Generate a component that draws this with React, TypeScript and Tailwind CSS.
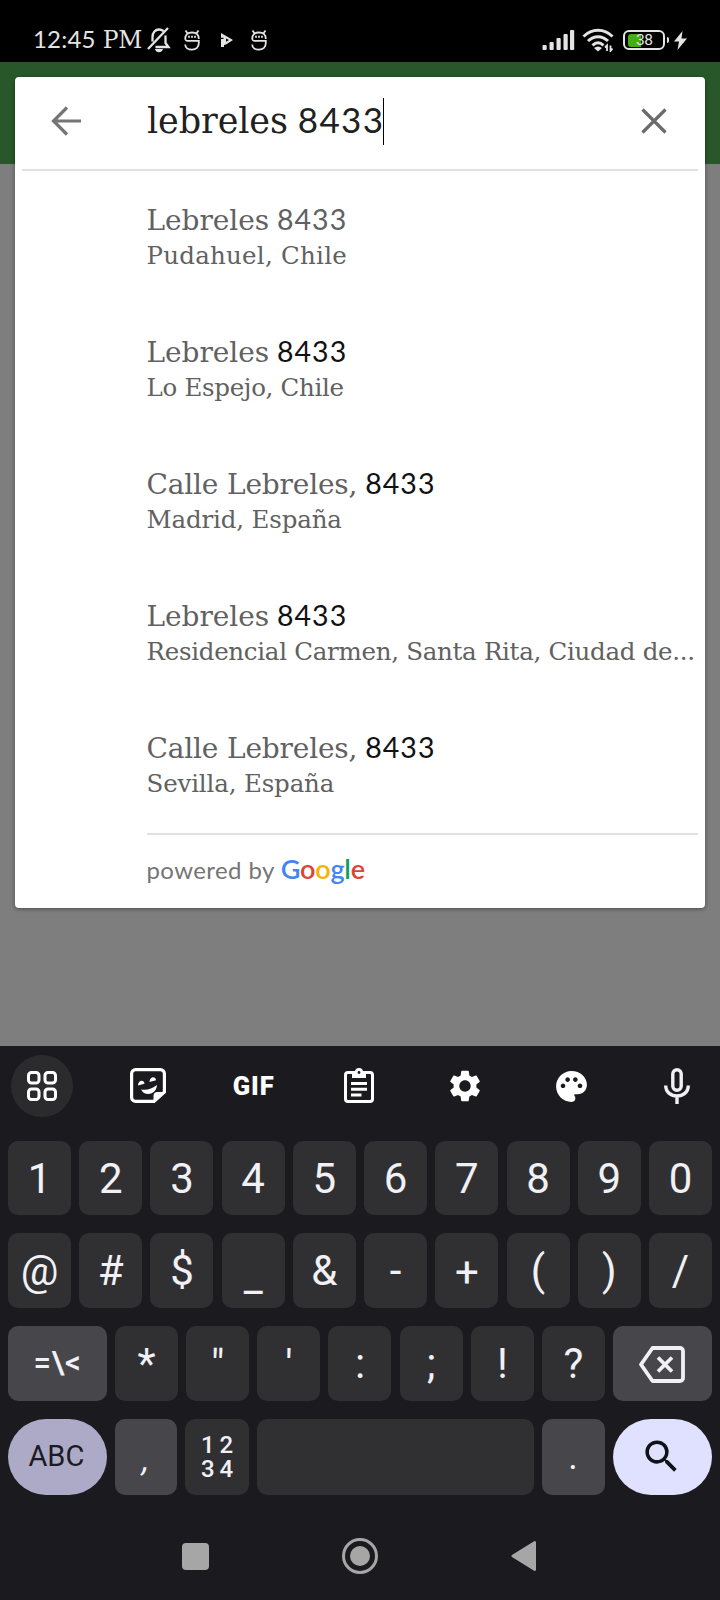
import type { ReactNode } from "react";
import { MdPalette, MdSearch, MdSettings } from "react-icons/md";

const slab = "font-['DejaVu_Serif',serif]";

function Digits({ children, className = "" }: { children: ReactNode; className?: string }) {
  return <span className={`font-[Lato,sans-serif] leading-none ${className}`}>{children}</span>;
}

function Mascot() {
  return (
    <svg width="16" height="21" viewBox="0 0 16 21" fill="none" stroke="#e4e4e4" strokeWidth="1.8">
      <path d="M1.500 .5l1.800 2.500M14.500 .5l-1.800 2.500M1.200 9C1.200 4.800 3.500 2.500 8 2.500S14.800 4.800 14.800 9M1.200 8C1.200 10.500 2 10.800 4 10.800H14.800V13c0 4.200-2.800 6.600-6.800 6.600S1.200 17.500 1.200 14.500" />
      <path d="M5 5.800v2M8 5.800v2M11 5.800v2" />
    </svg>
  );
}

function StatusBar() {
  return (
    <header className="flex h-[62px] items-center bg-black pt-[18px] pl-[33px] text-[#e4e4e4]">
      <div className={`${slab} w-[112px] whitespace-nowrap text-[23.500px] leading-[30px] tracking-[-0.3px]`}>
        <Digits className="text-[24px] tracking-[0.2px]">12:45</Digits>
        <span className="ml-[7px]">PM</span>
      </div>
      <svg className="ml-[2px]" width="24" height="26" viewBox="0 0 24 26" fill="none" stroke="#e4e4e4" strokeWidth="2.300">
        <path d="M1 22L21 1M5.500 14.500V10c0-4.500 3-7.500 6.500-7.500 2 0 3 .5 4.500 1.500M8.500 20h13L18.500 16V8.500" />
        <path d="M8 22h8c-.8 2.500-2 3.200-4 3.200s-3.400-.7-4-3.200z" fill="#e4e4e4" stroke="none" />
      </svg>
      <div className="ml-[13px]"><Mascot /></div>
      <svg className="ml-[21px]" width="12" height="14" viewBox="0 0 12 14" fill="#e4e4e4">
        <path fillRule="evenodd" d="M0 0l12 7-7 4.500-2 .5v2H0V6h2.500v-1.200H0zM5 5.500v3.300L8 7z" />
      </svg>
      <div className="ml-[18px]"><Mascot /></div>
      <div className="ml-[275px] flex items-center">
        <svg width="33" height="22" viewBox="0 0 33 22" fill="#e4e4e4">
          <rect x="0.500" y="16" width="4.200" height="5" rx="1" />
          <rect x="7.500" y="13" width="4.200" height="8" rx="1" />
          <rect x="14.500" y="9" width="4.200" height="12" rx="1" />
          <rect x="21.500" y="5" width="4.200" height="16" rx="1" />
          <rect x="28" y="1" width="4.200" height="20" rx="1" />
        </svg>
        <svg className="ml-[7px]" width="32" height="24" viewBox="0 0 32 24" fill="none" stroke="#e4e4e4" strokeWidth="3">
          <path d="M1.500 8.500C10 .3 22 .3 30.500 8.500M6 13c6-5.800 14-5.800 20 0M10.500 17.300c3.500-3.200 7.500-3.200 11 0" />
          <path d="M12 20c2.500-2 5.500-2 8 0l-4 3.500z" fill="#e4e4e4" stroke="none" />
          <path d="M25 23v-5.500l-2 2M28.500 17.500V23l2-2.500" strokeWidth="1.800" />
        </svg>
        <div className="ml-[9px] flex h-[20px] w-[42px] items-center rounded-[6px] border-2 border-[#e4e4e4] pl-[3px]">
          <div className="h-[13px] w-[13px] rounded-l-[3px] bg-[#43b00e]" />
          <span className="-ml-[5px] font-[Roboto,sans-serif] text-[15.500px] leading-[14px] tracking-[-0.4px]">38</span>
        </div>
        <div className="ml-[2px] h-[6px] w-[2px] rounded-r bg-[#e4e4e4]" />
        <svg className="ml-[5px]" width="13" height="19" viewBox="0 0 13 19" fill="#e4e4e4">
          <path d="M8.500 0L0 10.500h5L3.500 19 13 7.500H7.500z" />
        </svg>
      </div>
    </header>
  );
}

const results = [
  { street: "Lebreles", match: false, place: "Pudahuel, Chile", spacing: "tracking-[0.25px]" },
  { street: "Lebreles", match: true, place: "Lo Espejo, Chile", spacing: "tracking-[-0.3px]" },
  { street: "Calle Lebreles,", match: true, place: "Madrid, España", spacing: "tracking-[-0.15px]" },
  { street: "Lebreles", match: true, place: "Residencial Carmen, Santa Rita, Ciudad de...", spacing: "tracking-[-0.28px]" },
  { street: "Calle Lebreles,", match: true, place: "Sevilla, España", spacing: "tracking-[-0.15px]" },
];

function SearchCard() {
  return (
    <section className="relative flex h-[831px] flex-col rounded-[4px] bg-white shadow-[0_1px_4px_rgba(0,0,0,0.4)]">
      <div className="mx-[7px] flex h-[94px] items-center border-b-2 border-[#e0e0e0] pr-[31px] pb-[4px] pl-[29px]">
        <svg width="30" height="30" viewBox="0 0 30 30" fill="none" stroke="#757575" strokeWidth="3.200">
          <path d="M16 1.500L2.500 15 16 28.500M2.500 15H30" />
        </svg>
        <div className={`${slab} ml-[66px] flex h-[48px] w-[236px] items-baseline whitespace-nowrap text-[35px] leading-[48px] tracking-[-0.1px] text-[#212121]`}>
          <span>lebreles</span>
          <Digits className="ml-[10px] text-[35px] tracking-[1.300px]">8433</Digits>
        </div>
        <div className="h-[47px] w-px bg-black" />
        <svg className="ml-auto" width="26" height="26" viewBox="0 0 26 26" fill="none" stroke="#6b6b6b" strokeWidth="3.200">
          <path d="M1.500 1.500l23 23M24.500 1.500l-23 23" />
        </svg>
      </div>
      <ul className="ml-[131.500px] pt-[2px] text-[#616161]">
        {results.map((r) => (
          <li key={r.street + r.place} className={`${slab} h-[132px] pt-[30px] whitespace-nowrap`}>
            <div className={`flex h-[36px] items-baseline text-[28px] leading-[36px] ${r.street === "Lebreles" ? "tracking-[-0.05px]" : "tracking-[-0.17px]"}`}>
              <span>{r.street}</span>
              <Digits className={`ml-[8px] text-[28.500px] tracking-[1px] ${r.match ? "text-[#111111]" : ""}`}>8433</Digits>
            </div>
            <div className={`-mt-px h-[36px] text-[24.500px] leading-[36px] ${r.spacing}`}>{r.place}</div>
          </li>
        ))}
      </ul>
      <div className="mr-[7px] ml-[131.500px] border-t-2 border-[#e0e0e0] pt-[16px] font-[Lato,sans-serif] leading-[36px] whitespace-nowrap text-[#757575]">
        <span className="text-[24px] tracking-[0.4px]">powered by</span>
        <span className="ml-[6px] text-[27px] font-semibold tracking-[-0.2px]">
          <span className="text-[#4285f4]">G</span>
          <span className="text-[#db4437]">o</span>
          <span className="text-[#f4b400]">o</span>
          <span className="text-[#4285f4]">g</span>
          <span className="text-[#0f9d58]">l</span>
          <span className="text-[#db4437]">e</span>
        </span>
      </div>
    </section>
  );
}

function Tool({ children, className = "" }: { children: ReactNode; className?: string }) {
  return <div className={`flex size-[62px] items-center justify-center rounded-full ${className}`}>{children}</div>;
}

function Toolbar() {
  return (
    <div className="flex h-[80px] items-center justify-between pr-[12px] pl-[11px] text-white">
      <Tool className="bg-[#2b2b2e]">
        <svg width="30" height="30" viewBox="0 0 30 30" fill="none" stroke="white" strokeWidth="3">
          <rect x="1.500" y="1.500" width="10.500" height="10.500" rx="3" />
          <rect x="18" y="1.500" width="10.500" height="10.500" rx="3" />
          <rect x="1.500" y="18" width="10.500" height="10.500" rx="3" />
          <rect x="18" y="18" width="10.500" height="10.500" rx="3" />
        </svg>
      </Tool>
      <Tool>
        <svg width="36" height="36" viewBox="0 0 36 36" fill="none" stroke="white" strokeWidth="3.200">
          <path d="M24 33.400H5.600a4 4 0 0 1-4-4V5.600a4 4 0 0 1 4-4h24.800a4 4 0 0 1 4 4V24z" />
          <path d="M23.500 34.500V28a4 4 0 0 1 4-4h8z" fill="white" stroke="none" />
          <path d="M11 21.500c6 1 11-.5 16-4.500-.5 5.500-4 9-8.500 9-3.500 0-6-1.500-7.500-4.500z" fill="white" stroke="none" />
          <path d="M8 17.500c0-6 6.500-6 6.500-1.700zM19.500 14c0-6 6.500-6 6.500-1.700z" fill="white" stroke="none" />
        </svg>
      </Tool>
      <Tool>
        <span className="pt-[2px] font-[Roboto,sans-serif] text-[25.500px] leading-none font-black tracking-[0.9px]">GIF</span>
      </Tool>
      <Tool>
        <svg width="30" height="36" viewBox="0 0 30 36" fill="none" stroke="white" strokeWidth="3">
          <rect x="1.500" y="4.500" width="27" height="29" rx="2.500" />
          <path d="M8 4h3a4 4 0 0 1 8 0h3v6H8z" fill="white" stroke="none" />
          <circle cx="15" cy="4.500" r="1.400" fill="#1b1b1f" stroke="none" />
          <path d="M7 15.500h16M7 21.300h16M7 27h10.500" />
        </svg>
      </Tool>
      <Tool><MdSettings className="size-[38px]" /></Tool>
      <Tool><MdPalette className="size-[37px]" /></Tool>
      <Tool>
        <svg width="26" height="36" viewBox="0 0 26 36" fill="none" stroke="#f1f0f4" strokeWidth="3.400">
          <rect x="8.800" y="1.800" width="8.400" height="20.500" rx="4.200" />
          <path d="M1.700 17.500c0 14 22.600 14 22.600 0M13 28v8" />
        </svg>
      </Tool>
    </div>
  );
}

function Key({ children, className = "" }: { children?: ReactNode; className?: string }) {
  return <div className={`flex items-center justify-center rounded-[10px] ${className}`}>{children}</div>;
}

const plain = "w-[63px] bg-[#303033] text-[42px]";

const lowered: Record<string, string> = { _: "pt-[12px]", "+": "pt-[4px]", '"': "pt-[4px]", "'": "pt-[4px]" };

function Keyboard() {
  return (
    <section className="h-[554px] bg-[#1b1b1f] font-[Roboto,sans-serif] text-[#f1f0f4]">
      <Toolbar />
      <div className="flex flex-col gap-[18px] px-[8px] pt-[15px]">
        <div className="flex h-[74px] justify-between">
          {"1234567890".split("").map((k) => (
            <Key key={k} className={plain}>{k}</Key>
          ))}
        </div>
        <div className="flex h-[75px] justify-between">
          {"@#$_&-+()/".split("").map((k) => (
            <Key key={k} className={`${plain} ${lowered[k] ?? ""}`}>{k}</Key>
          ))}
        </div>
        <div className="flex h-[75px] justify-between">
          <Key className="w-[98.800px] bg-[#47464b] text-[31px] font-medium tracking-[0.6px]">=\&lt;</Key>
          {"*\"':;!?".split("").map((k) => (
            <Key key={k} className={`${plain} ${lowered[k] ?? ""}`}>{k}</Key>
          ))}
          <Key className="w-[98.800px] bg-[#47464b] pt-[2px] pr-[2px]">
            <svg width="46" height="37" viewBox="0 0 46 37" fill="none" stroke="#f1f0f4" strokeWidth="3.800" strokeLinejoin="round">
              <path d="M13.500 2H41a3 3 0 0 1 3 3v27a3 3 0 0 1-3 3H13.500L2 18.500zM19 11.500l14 14M33 11.500l-14 14" />
            </svg>
          </Key>
        </div>
        <div className="flex h-[76px] justify-between">
          <Key className="w-[98.800px] rounded-[38px] bg-[#acaac6] pr-[2px] text-[29px] text-[#1b1b23]">ABC</Key>
          <Key className="w-[62.500px] bg-[#47464b] pt-[4px] text-[34px]">
            <span className="-skew-x-12">,</span>
          </Key>
          <Key className="w-[63.200px] bg-[#303033]">
            <div className="grid grid-cols-2 gap-x-[5px] text-center text-[24px] leading-[24px] font-medium">
              <span>1</span><span>2</span><span>3</span><span>4</span>
            </div>
          </Key>
          <Key className="w-[277px] bg-[#303033]" />
          <Key className="w-[63.200px] bg-[#47464b] pr-[1px] text-[36px]">.</Key>
          <Key className="w-[98.800px] rounded-[38px] bg-[#e0e0ff] pr-[2px] pb-[2px]">
            <MdSearch className="size-[43px] text-[#111118]" />
          </Key>
        </div>
      </div>
      <nav className="flex items-center justify-between pt-[43px] pr-[184px] pl-[182px]">
        <div className="size-[27px] rounded-[4px] bg-[#a6a6a6]" />
        <svg width="36" height="36" viewBox="0 0 36 36">
          <circle cx="18" cy="18" r="16.500" fill="none" stroke="#a6a6a6" strokeWidth="3" />
          <circle cx="18" cy="18" r="10" fill="#a6a6a6" />
        </svg>
        <svg width="25" height="32" viewBox="0 0 26 32" fill="#a6a6a6">
          <path d="M24 .7a1.300 1.300 0 0 1 2 1v28.600a1.300 1.300 0 0 1-2 1L1 17a1.300 1.300 0 0 1 0-2z" />
        </svg>
      </nav>
    </section>
  );
}

export default function App() {
  return (
    <div className="h-[1600px] w-[720px] overflow-hidden bg-black">
      <StatusBar />
      <main className="relative h-[984px] bg-[#7e7e7e] px-[15px] pt-[15px]">
        <div className="absolute inset-x-0 top-0 h-[102px] bg-[#285829]" />
        <SearchCard />
      </main>
      <Keyboard />
    </div>
  );
}
